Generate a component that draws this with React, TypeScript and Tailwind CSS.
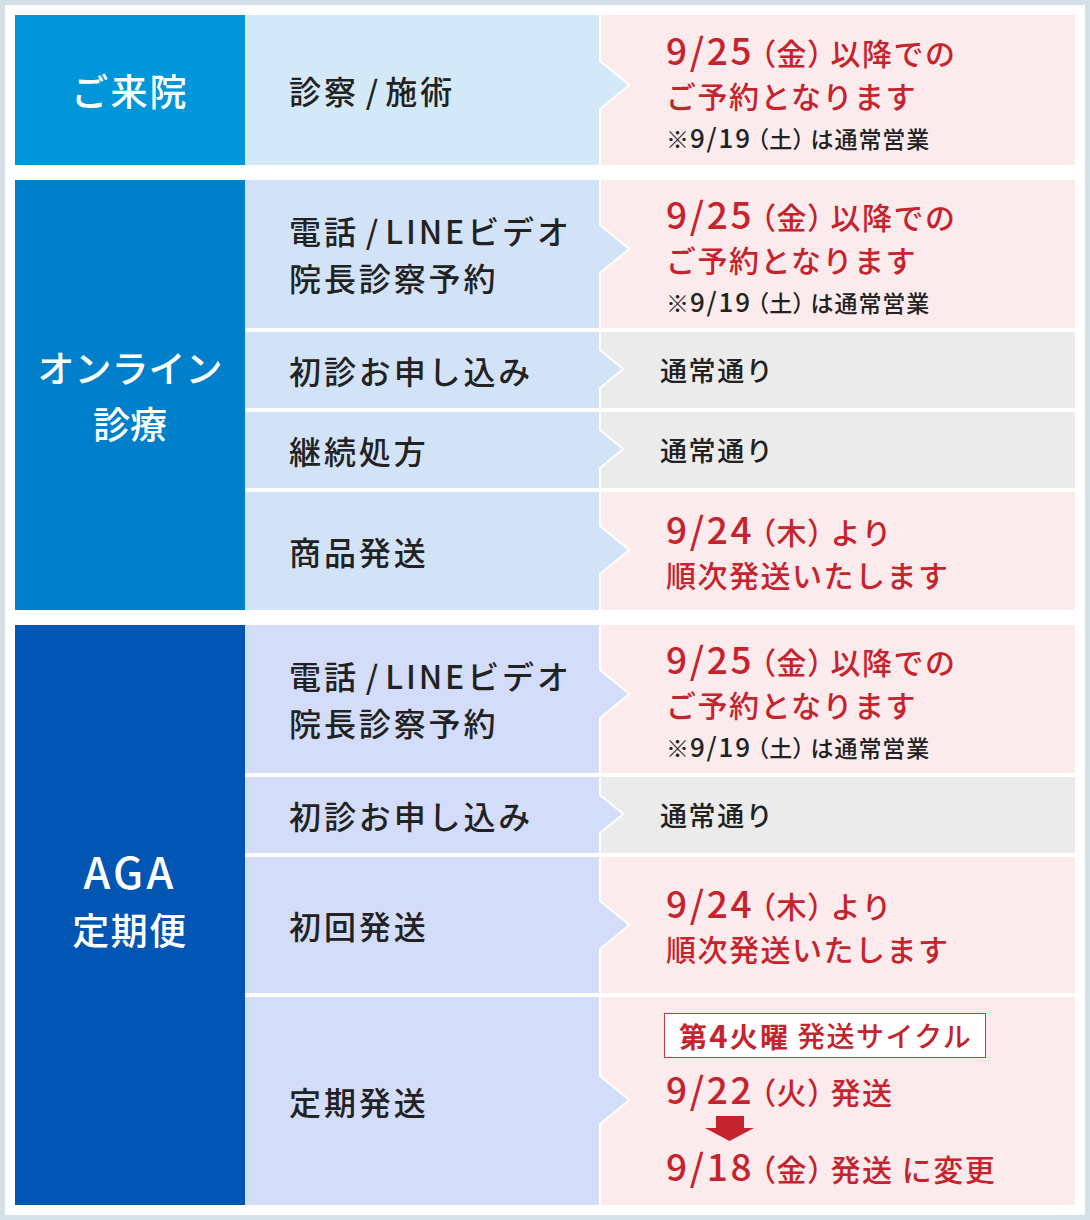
import React from 'react';

type Tone = 'pink' | 'gray';

interface RowDef {
  height: string;
  mid: React.ReactNode[];
  tone: Tone;
  arrowPos: string;
  small?: boolean;
  right: React.ReactNode;
}

interface SectionDef {
  label: React.ReactNode[];
  labelBg: string;
  labelPad: string;
  midBg: string;
  midFill: string;
  rows: RowDef[];
}

const red = 'text-[#c5232d]';
const redLine = `text-[30px] leading-[43px] font-medium tracking-[0.05em] ${red}`;

// 右向きの矢印（白フチ付き）
function Pointer({ fill, small, pos }: { fill: string; small?: boolean; pos: string }) {
  const w = small ? 26 : 32;
  const h = small ? 42 : 52;
  return (
    <svg width={w} height={h} viewBox={`0 0 ${w} ${h}`} className={`absolute -left-[2px] ${pos}`}>
      <polygon points={`0,0 ${w},${h / 2} 0,${h}`} fill="#ffffff" />
      <polygon points={`0,2.6 ${w - 3.2},${h / 2} 0,${h - 2.6}`} fill={fill} />
    </svg>
  );
}

// 数字は大きめ
function D({ children, size = 'text-[37px]' }: { children: React.ReactNode; size?: string }) {
  return <span className={`${size} tracking-[0.07em]`}>{children}</span>;
}

// 括弧はプロポーショナル
function Pa({ children, gap = 'mx-[6px]' }: { children: React.ReactNode; gap?: string }) {
  return <span className={`[font-feature-settings:'palt'] ${gap}`}>{children}</span>;
}

function Slash() {
  return <span className="mx-[7px] tracking-normal">/</span>;
}

function Reserve() {
  return (
    <div className="flex flex-col">
      <p className={redLine}>
        <D>9/25</D>
        <Pa>（金）</Pa>以降での
      </p>
      <p className={redLine}>ご予約となります</p>
      <p className="mt-[5px] text-[23px] leading-[30px] font-medium tracking-[0.04em] text-[#222]">
        ※<D size="text-[26px]">9/19</D>
        <Pa gap="mx-[5px]">（土）</Pa>は通常営業
      </p>
    </div>
  );
}

function Ship() {
  return (
    <div className="flex flex-col">
      <p className={redLine}>
        <D>9/24</D>
        <Pa>（木）</Pa>より
      </p>
      <p className={redLine}>順次発送いたします</p>
    </div>
  );
}

function Normal() {
  return <p className="-ml-[6px] text-[27px] leading-[36px] font-medium tracking-[0.06em] text-[#222]">通常通り</p>;
}

function Cycle() {
  return (
    <div className="flex flex-col items-start">
      <div className="-ml-[2px] flex h-[45px] w-[322px] items-center border border-[#c83a42] bg-white pl-[14px]">
        <span className={`text-[28px] font-bold tracking-[0.08em] ${red}`}>
          第<D size="text-[31px]">4</D>火曜
        </span>
        <span className={`ml-[7px] text-[28px] font-medium tracking-[0.05em] ${red}`}>発送サイクル</span>
      </div>
      <p className={`mt-[9px] ${redLine}`}>
        <D>9/22</D>
        <Pa>（火）</Pa>発送
      </p>
      <svg width="49" height="25" viewBox="0 0 49 25" className="ml-[39px] mt-[3px]">
        <rect x="11" y="0" width="28" height="13" fill="#c5232d" />
        <polygon points="0,12 49,12 24.5,25" fill="#c5232d" />
      </svg>
      <p className={`mt-[3px] ${redLine}`}>
        <D>9/18</D>
        <Pa>（金）</Pa>発送 に変更
      </p>
    </div>
  );
}

const phone = [
  <>
    電話<Slash />LINEビデオ
  </>,
  '院長診察予約',
];

const sections: SectionDef[] = [
  {
    label: [<span className="tracking-[0.06em]">ご来院</span>],
    labelBg: 'bg-[#0096d9]',
    labelPad: '',
    midBg: 'bg-[#d3e9f8]',
    midFill: '#d3e9f8',
    rows: [
      {
        height: 'h-[150px]',
        mid: [
          <>
            診察<Slash />施術
          </>,
        ],
        tone: 'pink',
        arrowPos: 'top-[44px]',
        right: <Reserve />,
      },
    ],
  },
  {
    label: ['オンライン', '診療'],
    labelBg: 'bg-[#007fca]',
    labelPad: '',
    midBg: 'bg-[#d2e3f8]',
    midFill: '#d2e3f8',
    rows: [
      { height: 'h-[148px]', mid: phone, tone: 'pink', arrowPos: 'top-[43px]', right: <Reserve /> },
      { height: 'h-[76px]', mid: ['初診お申し込み'], tone: 'gray', arrowPos: 'top-[16px]', small: true, right: <Normal /> },
      { height: 'h-[76px]', mid: ['継続処方'], tone: 'gray', arrowPos: 'top-[16px]', small: true, right: <Normal /> },
      { height: 'h-[118px]', mid: ['商品発送'], tone: 'pink', arrowPos: 'top-[32px]', right: <Ship /> },
    ],
  },
  {
    label: [
      <span className="text-[43px] tracking-[0.08em]">AGA</span>,
      <span className="tracking-[0.04em]">定期便</span>,
    ],
    labelBg: 'bg-[#0056b2]',
    labelPad: 'pb-[32px]',
    midBg: 'bg-[#d3dcf8]',
    midFill: '#d3dcf8',
    rows: [
      { height: 'h-[148px]', mid: phone, tone: 'pink', arrowPos: 'top-[43px]', right: <Reserve /> },
      { height: 'h-[76px]', mid: ['初診お申し込み'], tone: 'gray', arrowPos: 'top-[16px]', small: true, right: <Normal /> },
      { height: 'h-[136px]', mid: ['初回発送'], tone: 'pink', arrowPos: 'top-[42px]', right: <Ship /> },
      { height: 'h-[208px]', mid: ['定期発送'], tone: 'pink', arrowPos: 'top-[77px]', right: <Cycle /> },
    ],
  },
];

export default function App() {
  return (
    <div className="h-[1220px] w-[1090px] border-[5px] border-[#d3e0e6] bg-white p-[10px] font-['Noto_Sans_CJK_JP','Noto_Sans',sans-serif]">
      <div className="flex flex-col gap-[15px]">
        {sections.map((sec, si) => (
          <div key={si} className="flex">
            {/* 左の区分ラベル */}
            <div className={`flex w-[230px] flex-col items-center justify-center text-white ${sec.labelBg} ${sec.labelPad}`}>
              {sec.label.map((l, i) => (
                <p key={i} className="text-[37px] leading-[56px] font-medium">
                  {l}
                </p>
              ))}
            </div>
            <div className="flex flex-1 flex-col gap-[4px]">
              {sec.rows.map((row, ri) => (
                <div key={ri} className={`flex ${row.height}`}>
                  <div className={`flex w-[354px] flex-col justify-center pl-[44px] ${sec.midBg}`}>
                    {row.mid.map((m, i) => (
                      <p key={i} className="text-[32px] leading-[47px] font-medium tracking-[0.09em] text-[#222]">
                        {m}
                      </p>
                    ))}
                  </div>
                  <div
                    className={`relative flex flex-1 items-center border-l-2 border-white pl-[65px] ${
                      row.tone === 'pink' ? 'bg-[#fbebec]' : 'bg-[#ebebeb]'
                    }`}
                  >
                    <Pointer fill={sec.midFill} small={row.small} pos={row.arrowPos} />
                    {row.right}
                  </div>
                </div>
              ))}
            </div>
          </div>
        ))}
      </div>
    </div>
  );
}
